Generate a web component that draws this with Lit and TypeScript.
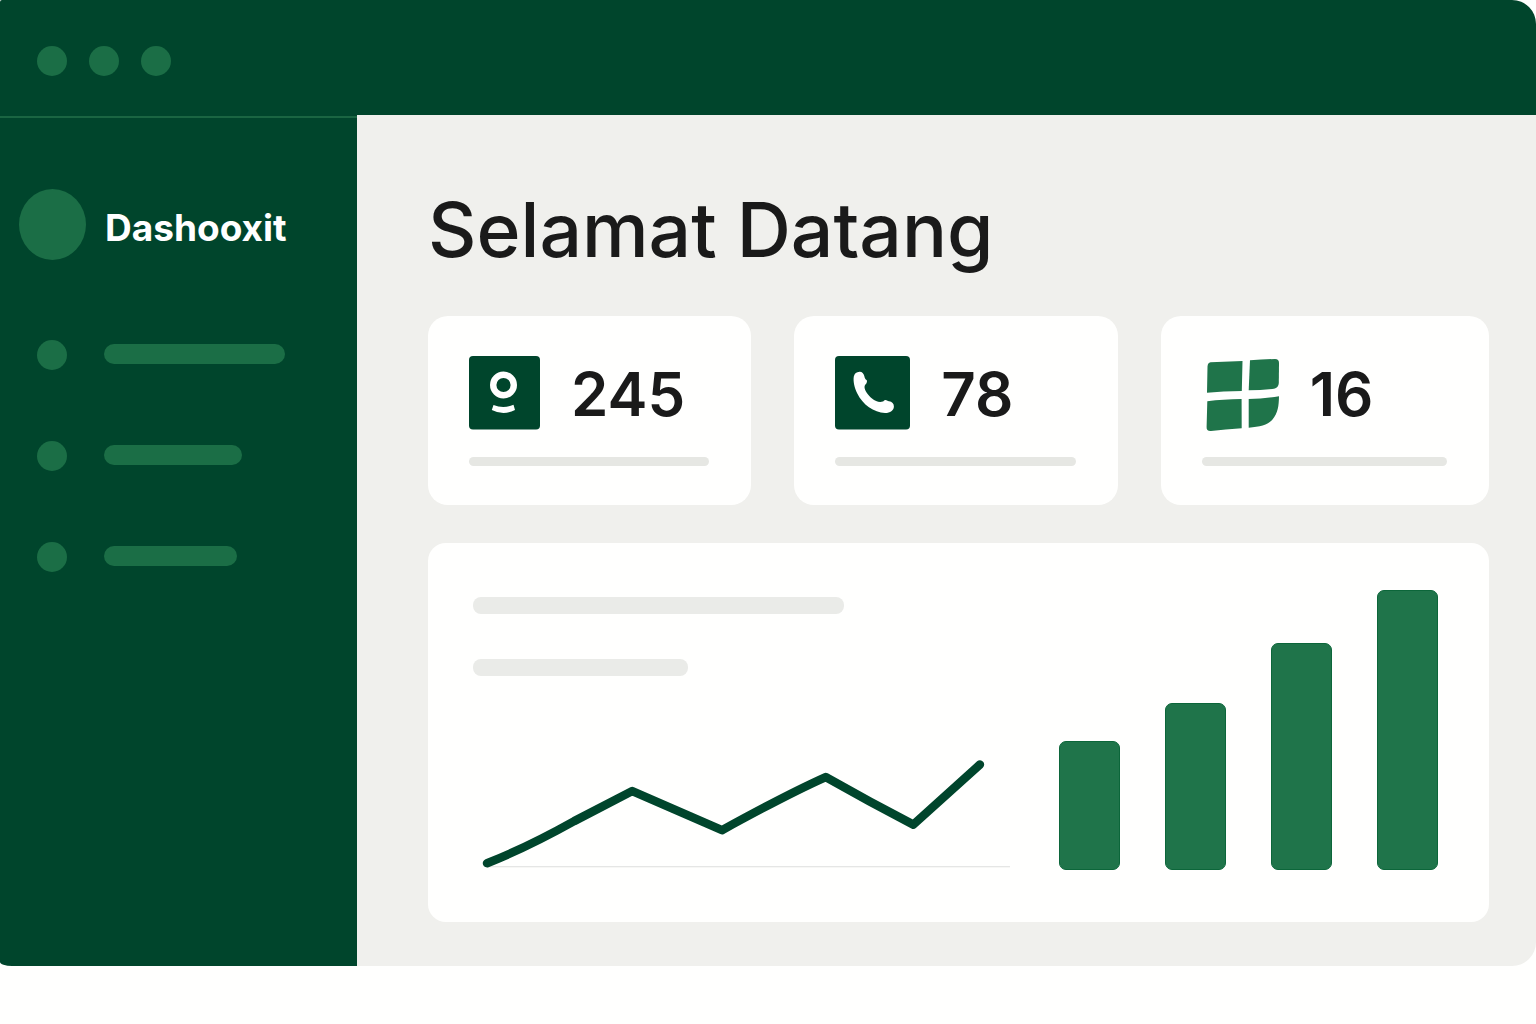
import { LitElement, html, css, TemplateResult } from "lit";
import { customElement, property } from "lit/decorators.js";

interface Stat {
  value: number;
  icon: TemplateResult;
}

const profileIcon = html`<svg width="71" height="74" viewBox="0 0 71 74" aria-hidden="true">
  <rect width="71" height="73.500" rx="4" fill="#00452c" />
  <circle cx="34.5" cy="29" r="10.3" fill="none" stroke="#fff" stroke-width="6.4" />
  <path d="M24.5 49 Q34.5 53 44.5 48.8 L46 54 Q34.500 60 22.800 54 Z" fill="#fff" />
</svg>`;

const phoneIcon = html`<svg width="75" height="74" viewBox="0 0 75 74" aria-hidden="true">
  <rect width="75" height="73.500" rx="4" fill="#00452c" />
  <path
    fill="#fff"
    d="M24.500 15.800 C27 15.600 28.500 17.500 29.300 20 C29.700 21.500 30 23.200 31.500 24 C32.300 24.500 32 25.800 31.600 27 C31.200 28.200 29.600 28.800 29.500 31 C29.500 34.500 33 39 37 42.500 C40.500 45.400 44.500 46.600 47.800 45.500 C49 45 49.200 43.800 50.500 43.900 C51.700 44 52.400 45 54 45.200 C57 45.600 59 47.600 58.900 50.500 C58.800 54.500 55 57.200 50 57.100 C39 56.500 27.500 48.500 22.300 37.500 C19.300 31.500 18 25 18.800 20.500 C19.500 17.500 21.500 16 24.500 15.800 Z"
  />
</svg>`;

const tilesIcon = html`<svg width="77" height="74" viewBox="1 0 77 74" aria-hidden="true">
  <g fill="#1f744a">
    <path d="M9.500 6.300 L41.500 5 L40.800 35 Q22 35.300 6 36.800 L6.500 10.500 Q6.800 6.600 9.500 6.300 Z" />
    <path d="M49 4.300 Q62 3.400 74 3 Q78 3 78 7 L77.800 27 Q77.600 31.600 73 32.800 Q60 34.200 47.700 34.300 Z" />
    <path d="M6.300 45.300 Q22 43.200 40.600 43 L40.700 72.300 Q24 73.400 10 75 Q5.300 75.300 5.600 71 Z" />
    <path d="M47.700 43 Q63 42.600 78 40.300 C77.800 50 77 57 71.500 63.500 C67 69 59 71 47.700 71.700 Z" />
  </g>
</svg>`;

@customElement("stat-card")
export class StatCard extends LitElement {
  @property({ attribute: false }) stat!: Stat;

  static styles = css`
    :host {
      display: block;
      box-sizing: border-box;
      padding: 40px 42px 39px 41px;
      border-radius: 20px;
      background: #fffffe;
    }
    .row {
      display: flex;
      align-items: center;
      gap: 31px;
      height: 74px;
    }
    svg {
      display: block;
      flex: none;
      overflow: visible;
    }
    .value {
      padding-top: 2px;
      font-size: 60px;
      line-height: 74px;
      font-weight: 600;
      color: #1a1a1a;
    }
    .line {
      height: 9px;
      margin-top: 27px;
      border-radius: 5px;
      background: #e6e7e3;
    }
  `;

  render() {
    return html`
      <div class="row">
        ${this.stat.icon}
        <span class="value">${this.stat.value}</span>
      </div>
      <div class="line"></div>
    `;
  }
}

@customElement("trend-panel")
export class TrendPanel extends LitElement {
  @property({ attribute: false }) bars: number[] = [];

  static styles = css`
    :host {
      display: grid;
      grid-template-columns: minmax(0, 1fr) auto;
      gap: 48px;
      box-sizing: border-box;
      padding: 47px 51px 52px 45px;
      border-radius: 18px;
      background: #fffffe;
    }
    .left {
      display: flex;
      flex-direction: column;
      padding-top: 7px;
    }
    .line {
      height: 17px;
      border-radius: 8px;
      background: #eaebe8;
    }
    .long {
      width: 69%;
    }
    .short {
      width: 40%;
      margin-top: 45px;
    }
    .trend {
      display: block;
      width: 100%;
      margin-top: auto;
    }
    .bars {
      display: flex;
      align-items: flex-end;
      gap: 45px;
    }
    .bar {
      box-sizing: border-box;
      width: 61px;
      border: 1px solid #0c663a;
      border-radius: 7px;
      background: #1f744a;
    }
  `;

  render() {
    return html`
      <div class="left">
        <div class="line long"></div>
        <div class="line short"></div>
        <svg class="trend" viewBox="0 0 537 120" role="img" aria-label="Tren">
          <path d="M14 116.500 H536" stroke="#dddedc" stroke-width="1" />
          <path
            d="M14 113 C42 102 67 90 101 71 L159 41 L248.500 80 Q314 44 352 27 Q396 52 439.500 74.500 L506 14.500"
            fill="none"
            stroke="#00452c"
            stroke-width="8.500"
            stroke-linecap="round"
            stroke-linejoin="round"
          />
        </svg>
      </div>
      <div class="bars">
        ${this.bars.map((h) => html`<div class="bar" style="height:${h}px"></div>`)}
      </div>
    `;
  }
}

@customElement("app-root")
export class AppRoot extends LitElement {
  private stats: Stat[] = [
    { value: 245, icon: profileIcon },
    { value: 78, icon: phoneIcon },
    { value: 16, icon: tilesIcon },
  ];

  private menu = [181, 138, 133];

  static styles = css`
    :host {
      display: block;
      min-height: 100vh;
      background: #fffffe;
      font-family: Inter, "Liberation Sans", sans-serif;
      color: #1a1a1a;
    }
    .window {
      overflow: hidden;
      border-radius: 2px 24px 24px 12px / 2px 24px 24px 4px;
    }
    .titlebar,
    .sidebar {
      background: #00452c;
    }
    .titlebar {
      display: flex;
      align-items: center;
      gap: 22px;
      box-sizing: border-box;
      height: 115px;
      padding: 6px 37px 0;
    }
    .dot {
      flex: none;
      width: 30px;
      height: 30px;
      border-radius: 50%;
      background: #1b6e46;
    }
    .body {
      display: grid;
      grid-template-columns: 357px minmax(0, 1fr);
    }
    .sidebar {
      padding-top: 1px;
    }
    .rule {
      height: 2px;
      background: #1a6542;
    }
    .brand {
      display: flex;
      align-items: center;
      gap: 19px;
      padding: 71px 19px 0;
    }
    .avatar {
      flex: none;
      width: 67px;
      height: 71px;
      border-radius: 50%;
      background: #1b6e46;
    }
    .name {
      padding-top: 6px;
      font-size: 37px;
      line-height: 46px;
      font-weight: 700;
      color: #fff;
    }
    .menu {
      display: flex;
      flex-direction: column;
      gap: 71px;
      margin: 0;
      padding: 80px 37px 0;
      list-style: none;
    }
    .link {
      display: flex;
      align-items: center;
      gap: 37px;
    }
    .pill {
      height: 20px;
      margin-bottom: 2px;
      border-radius: 10px;
      background: #1b6e46;
    }
    .content {
      padding: 71px 47px 44px 71px;
      background: #f0f0ed;
    }
    .title {
      margin: 0;
      font-size: 75px;
      line-height: 88px;
      font-weight: 500;
    }
    .stats {
      display: grid;
      grid-template-columns: 323fr 323fr 328fr;
      gap: 43px;
      margin-top: 42px;
    }
    .panel {
      margin-top: 38px;
    }
  `;

  render() {
    return html`
      <div class="window">
        <header class="titlebar">
          <span class="dot"></span><span class="dot"></span><span class="dot"></span>
        </header>
        <div class="body">
          <aside class="sidebar">
            <div class="rule"></div>
            <div class="brand">
              <span class="avatar"></span>
              <span class="name">Dashooxit</span>
            </div>
            <nav>
              <ul class="menu">
                ${this.menu.map(
                  (w, i) => html`<li>
                    <a class="link" href="#menu-${i + 1}" aria-label="Menu ${i + 1}">
                      <span class="dot"></span>
                      <span class="pill" style="width:${w}px"></span>
                    </a>
                  </li>`
                )}
              </ul>
            </nav>
          </aside>
          <main class="content">
            <h1 class="title">Selamat Datang</h1>
            <section class="stats">
              ${this.stats.map((s) => html`<stat-card .stat=${s}></stat-card>`)}
            </section>
            <trend-panel class="panel" .bars=${[129, 167, 227, 280]}></trend-panel>
          </main>
        </div>
      </div>
    `;
  }
}
